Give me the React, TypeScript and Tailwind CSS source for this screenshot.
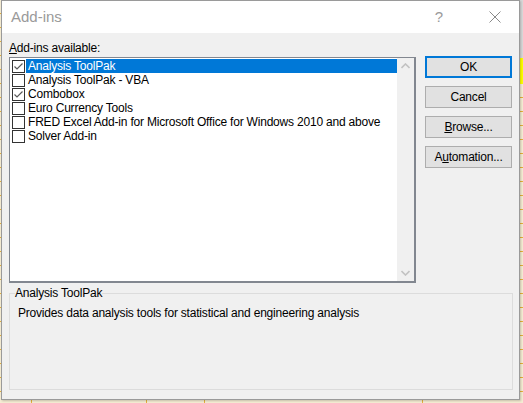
import type { ReactNode } from "react";

const FONT = { fontFamily: '"Segoe UI", "Liberation Sans", Arial, sans-serif' };

const addIns = [
  { name: "Analysis ToolPak", checked: true },
  { name: "Analysis ToolPak - VBA", checked: false },
  { name: "Combobox", checked: true },
  { name: "Euro Currency Tools", checked: false },
  { name: "FRED Excel Add-in for Microsoft Office for Windows 2010 and above", checked: false },
  { name: "Solver Add-in", checked: false },
];

function CheckBox({ checked }: { checked: boolean }) {
  return (
    <span className="w-[13px] h-[13px] border border-[#333333] bg-white flex items-center justify-center shrink-0">
      {checked && (
        <svg width="11" height="11" viewBox="0 0 11 11">
          <path d="M1.5 5.5 L4 8 L9.5 2.5" fill="none" stroke="#5a5a5a" strokeWidth="1.2" />
        </svg>
      )}
    </span>
  );
}

function Btn({ children, primary }: { children: ReactNode; primary?: boolean }) {
  return (
    <button
      type="button"
      className={
        primary
          ? "h-[22px] w-[87px] border-2 border-[#0078d7] bg-[#e1e1e1] text-[12px] text-black flex items-center justify-center"
          : "h-[22px] w-[87px] border border-[#adadad] bg-[#e1e1e1] text-[12px] text-black flex items-center justify-center"
      }
    >
      {children}
    </button>
  );
}

export default function App() {
  return (
    <div
      className="relative w-[523px] h-[403px] overflow-hidden bg-[repeating-linear-gradient(to_bottom,#f5ecd3_0px,#f5ecd3_13px,#e6b13a_13px,#e6b13a_14px)]"
      style={FONT}
    >
      {/* spreadsheet bits peeking out around the dialog */}
      <div className="absolute right-0 top-0 w-[4px] h-[58px] bg-[#d8d8d8]" />
      <div className="absolute right-0 top-[58px] w-[4px] h-[26px] bg-[#ffff00]" />
      <div className="absolute left-[31px] bottom-0 w-px h-[4px] bg-[#e6b13a]" />
      <div className="absolute left-[146px] bottom-0 w-px h-[4px] bg-[#e6b13a]" />
      <div className="absolute left-[204px] bottom-0 w-px h-[4px] bg-[#e6b13a]" />
      <div className="absolute left-[422px] bottom-0 w-px h-[4px] bg-[#e6b13a]" />

      {/* dialog window */}
      <div className="absolute left-[1px] top-0 w-[519px] h-[400px] border border-[#9a9a9a] bg-[#f0f0f0] flex flex-col shadow-[1px_1px_2px_rgba(0,0,0,0.2)]">
        {/* title bar */}
        <div className="h-[32px] bg-white flex items-center shrink-0">
          <span className="ml-[9px] text-[15px] text-[#9a9a9a]">Add-ins</span>
          <span className="ml-auto mr-[46px] text-[15px] text-[#9a9a9a]">?</span>
          <svg width="12" height="12" viewBox="0 0 12 12" className="mr-[18px]">
            <path d="M0.5 0.5 L11.5 11.5 M11.5 0.5 L0.5 11.5" stroke="#8a8a8a" strokeWidth="1" />
          </svg>
        </div>

        {/* body */}
        <div className="flex-1 px-[7px] pt-[7px] pb-[9px] flex flex-col text-[12px] tracking-[-0.2px] text-black">
          <div className="flex gap-[9px]">
            <div className="w-[407px] flex flex-col">
              <div className="leading-[17px] h-[17px]">
                <span className="underline">A</span>dd-ins available:
              </div>
              <div className="h-[226px] bg-white border border-[#828790] border-r-2 border-b-2 flex">
                <div className="flex-1 pt-[1px] pl-[2px]">
                  {addIns.map((a, i) => (
                    <div key={a.name} className="h-[14px] flex items-center">
                      <CheckBox checked={a.checked} />
                      <span
                        className={
                          i === 0
                            ? "flex-1 h-[14px] ml-[1px] pl-[2px] leading-[14px] bg-[#0078d7] text-white whitespace-nowrap"
                            : "flex-1 h-[14px] ml-[1px] pl-[2px] leading-[14px] whitespace-nowrap"
                        }
                      >
                        {a.name}
                      </span>
                    </div>
                  ))}
                </div>
                <div className="w-[17px] bg-[#f0f0f0] flex flex-col items-center justify-between py-[5px]">
                  <svg width="9" height="6" viewBox="0 0 9 6">
                    <path d="M0.5 5 L4.5 1 L8.5 5" fill="none" stroke="#c2c2c2" strokeWidth="1.6" />
                  </svg>
                  <svg width="9" height="6" viewBox="0 0 9 6">
                    <path d="M0.5 1 L4.5 5 L8.5 1" fill="none" stroke="#c2c2c2" strokeWidth="1.6" />
                  </svg>
                </div>
              </div>
            </div>

            <div className="pt-[16px] flex flex-col gap-[8px]">
              <Btn primary>OK</Btn>
              <Btn>Cancel</Btn>
              <Btn>
                <span className="underline">B</span>rowse...
              </Btn>
              <Btn>
                A<span className="underline">u</span>tomation...
              </Btn>
            </div>
          </div>

          <fieldset className="mt-[3px] flex-1 border border-[#dcdcdc] px-[5px] w-[504px]">
            <legend className="text-[12px] leading-[14px] px-0">Analysis ToolPak</legend>
            <p className="pl-[3px] pt-[6px] leading-[14px]">
              Provides data analysis tools for statistical and engineering analysis
            </p>
          </fieldset>
        </div>
      </div>
    </div>
  );
}
